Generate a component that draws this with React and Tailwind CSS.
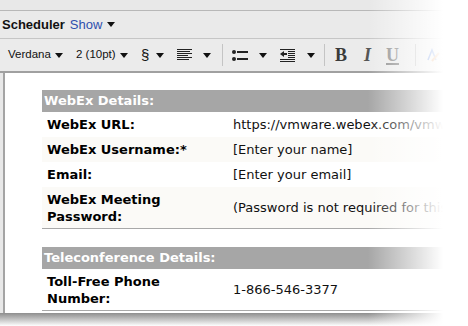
const Caret = ({ className = '' }) => (
  <svg width="8" height="5" viewBox="0 0 8 5" className={`shrink-0 ${className}`}>
    <polygon points="0,0 8,0 4,5" fill="#111" />
  </svg>
)

const AlignIcon = () => (
  <svg width="15" height="12" viewBox="0 0 15 12">
    <g fill="#222">
      <rect x="0" y="0" width="15" height="1" />
      <rect x="0" y="2" width="13" height="1" />
      <rect x="0" y="4" width="15" height="1" />
      <rect x="0" y="6" width="11" height="1" />
      <rect x="0" y="8" width="15" height="1" />
      <rect x="0" y="10" width="12" height="1" />
    </g>
  </svg>
)

const ListIcon = () => (
  <svg width="16" height="11" viewBox="0 0 16 11">
    <g fill="#222">
      <circle cx="2" cy="2" r="2" />
      <rect x="5" y="1" width="11" height="2" />
      <circle cx="2" cy="9" r="2" />
      <rect x="5" y="8" width="11" height="2" />
    </g>
  </svg>
)

const OutdentIcon = () => (
  <svg width="15" height="13" viewBox="0 0 15 13">
    <g fill="#222">
      <rect x="0" y="0" width="15" height="1" />
      <polygon points="0,5 4,2 4,8" />
      <rect x="4" y="4" width="3" height="2" />
      <rect x="8" y="2" width="7" height="1" />
      <rect x="8" y="4" width="7" height="1" />
      <rect x="8" y="6" width="7" height="1" />
      <rect x="8" y="8" width="7" height="1" />
      <rect x="0" y="10" width="15" height="1" />
      <rect x="0" y="12" width="15" height="1" />
    </g>
  </svg>
)

const ColorIcon = () => (
  <svg width="14" height="14" viewBox="0 0 14 14">
    <path d="M2 12 L6 2 L10 12" stroke="#3a6fd8" strokeWidth="1.5" fill="none" />
    <path d="M6 13 L13 5" stroke="#e08a3a" strokeWidth="2" />
  </svg>
)

const Sep = ({ className = '' }) => <div className={`h-[22px] w-px shrink-0 bg-[#c4c4c4] ${className}`} />

const webex = [
  { label: 'WebEx URL:', value: 'https://vmware.webex.com/vmware', bg: 'bg-white' },
  { label: 'WebEx Username:*', value: '[Enter your name]', bg: 'bg-[#fbfaf7]' },
  { label: 'Email:', value: '[Enter your email]', bg: 'bg-white' },
  { label: ['WebEx Meeting', 'Password:'], value: '(Password is not required for this meeting)', bg: 'bg-[#fbfaf7]', tall: true },
]

function Row({ row }) {
  return (
    <div className={`flex ${row.bg} ${row.tall ? 'h-[42px] border-b border-[#a8a8a8]' : 'h-[25px]'} items-center`}>
      <div className="w-[187px] shrink-0 pl-[5px] font-bold leading-[17px] text-black">
        {Array.isArray(row.label) ? row.label.map((l) => <div key={l}>{l}</div>) : row.label}
      </div>
      <div className="whitespace-nowrap pl-[4px] text-[#111]">{row.value}</div>
    </div>
  )
}

export default function App() {
  return (
    <div className="relative h-[326px] w-[468px] overflow-hidden bg-white font-['Liberation_Sans',Arial,sans-serif]">
      <div className="h-[11px] border-b border-[#b8b8b8] bg-[#e8e8e8]" />
      <div className="flex h-[28px] items-center border-b border-[#c6c6c6] bg-[#eaeaea] pl-[2px] text-[13px]">
        <span className="font-bold text-[#111]">Scheduler</span>
        <span className="ml-[5px] text-[#2f4fae]">Show</span>
        <Caret className="ml-[5px]" />
      </div>
      <div className="flex h-[34px] items-center border-b-2 border-[#a0a0a0] bg-[#ebebeb] pl-[8px] text-[11.5px] text-[#111]">
        <span className="w-[41px] shrink-0">Verdana</span>
        <Caret className="ml-[6px]" />
        <span className="ml-[13px] w-[40px] shrink-0 whitespace-nowrap">2 (10pt)</span>
        <Caret className="ml-[4px]" />
        <span className="ml-[13px] w-[6px] shrink-0 text-[15px]">§</span>
        <Caret className="ml-[9px]" />
        <div className="ml-[13px]"><AlignIcon /></div>
        <Caret className="ml-[11px]" />
        <Sep className="ml-[11px]" />
        <div className="ml-[9px]"><ListIcon /></div>
        <Caret className="ml-[11px]" />
        <div className="ml-[13px]"><OutdentIcon /></div>
        <Caret className="ml-[12px]" />
        <Sep className="ml-[9px]" />
        <span className="ml-[10px] w-[12px] shrink-0 font-['Liberation_Serif',serif] text-[18px] font-bold text-[#3a3a3a]">B</span>
        <span className="ml-[17px] w-[7px] shrink-0 font-['Liberation_Serif',serif] text-[18px] font-bold italic text-[#555]">I</span>
        <span className="ml-[15px] w-[13px] shrink-0 font-['Liberation_Serif',serif] text-[18px] font-bold text-[#8a8a8a] underline decoration-2 underline-offset-2">U</span>
        <Sep className="ml-[16px]" />
        <div className="ml-[10px]"><ColorIcon /></div>
      </div>
      <div className="h-[240px] bg-[#e8e8e8] pl-[3px]">
        <div className="h-full border-l-2 border-[#a4a4a4] bg-white pl-[37px] pt-[17px] font-['DejaVu_Sans',Verdana,sans-serif] text-[13px]">
          <div className="w-[440px]">
            <div className="flex h-[22px] items-center bg-[#a6a6a6] pl-[2px] font-bold text-white">WebEx Details:</div>
            {webex.map((row, i) => (
              <Row key={i} row={row} />
            ))}
            <div className="h-[18px]" />
            <div className="flex h-[22px] items-center bg-[#a6a6a6] pl-[2px] font-bold text-white">Teleconference Details:</div>
            <Row row={{ label: ['Toll-Free Phone', 'Number:'], value: '1-866-546-3377', bg: 'bg-white', tall: true }} />
          </div>
        </div>
      </div>
      <div className="h-[13px] bg-linear-to-b from-[#8e8e8e] to-white" />
      <div className="pointer-events-none absolute inset-y-0 right-0 w-[100px] bg-linear-to-r from-white/0 to-white to-75%" />
    </div>
  )
}
